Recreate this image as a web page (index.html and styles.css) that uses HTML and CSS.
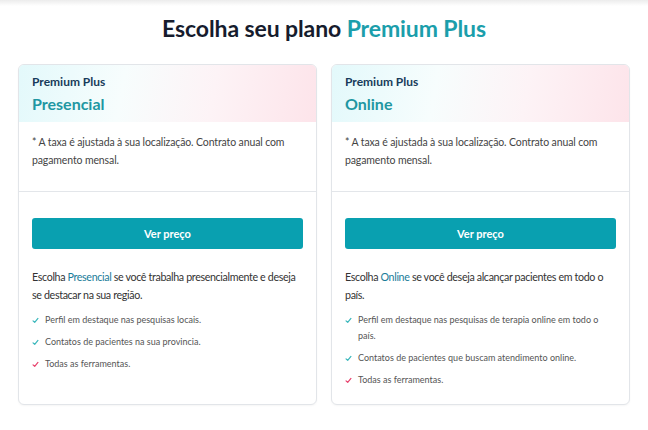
FILE: index.html
```html
<!DOCTYPE html>
<html lang="pt">
<head>
<meta charset="utf-8">
<title>Escolha seu plano Premium Plus</title>
<link rel="stylesheet" href="styles.css">
</head>
<body>
<main class="page">
  <h1 class="title">Escolha seu plano <span class="accent">Premium Plus</span></h1>
  <div class="plans">
    <section class="card">
      <header class="card-head">
        <div class="kicker">Premium Plus</div>
        <div class="plan-name">Presencial</div>
      </header>
      <div class="card-note">
        <p>* A taxa é ajustada à sua localização. Contrato anual com pagamento mensal.</p>
      </div>
      <div class="card-body">
        <button class="btn">Ver preço</button>
        <p class="desc">Escolha <span class="link">Presencial</span> se você trabalha presencialmente e deseja se destacar na sua região.</p>
        <ul class="features">
          <li><svg class="check teal" viewBox="0 0 8 8"><path d="M1.2 4.4 L3.1 6.2 L6.8 1.6"/></svg><span>Perfil em destaque nas pesquisas locais.</span></li>
          <li><svg class="check teal" viewBox="0 0 8 8"><path d="M1.2 4.4 L3.1 6.2 L6.8 1.6"/></svg><span>Contatos de pacientes na sua provincia.</span></li>
          <li><svg class="check pink" viewBox="0 0 8 8"><path d="M1.2 4.4 L3.1 6.2 L6.8 1.6"/></svg><span>Todas as ferramentas.</span></li>
        </ul>
      </div>
    </section>
    <section class="card">
      <header class="card-head">
        <div class="kicker">Premium Plus</div>
        <div class="plan-name">Online</div>
      </header>
      <div class="card-note">
        <p>* A taxa é ajustada à sua localização. Contrato anual com pagamento mensal.</p>
      </div>
      <div class="card-body">
        <button class="btn">Ver preço</button>
        <p class="desc">Escolha <span class="link">Online</span> se você deseja alcançar pacientes em todo o país.</p>
        <ul class="features">
          <li><svg class="check teal" viewBox="0 0 8 8"><path d="M1.2 4.4 L3.1 6.2 L6.8 1.6"/></svg><span>Perfil em destaque nas pesquisas de terapia online em todo o país.</span></li>
          <li><svg class="check teal" viewBox="0 0 8 8"><path d="M1.2 4.4 L3.1 6.2 L6.8 1.6"/></svg><span>Contatos de pacientes que buscam atendimento online.</span></li>
          <li><svg class="check pink" viewBox="0 0 8 8"><path d="M1.2 4.4 L3.1 6.2 L6.8 1.6"/></svg><span>Todas as ferramentas.</span></li>
        </ul>
      </div>
    </section>
  </div>
</main>
</body>
</html>
```
FILE: styles.css
```css
* { box-sizing: border-box; }
html, body { margin: 0; padding: 0; }
body {
  background: linear-gradient(#ececec 0, #ffffff 6px);
  font-family: Lato, "Noto Sans", sans-serif;
  color: #3a3a3a;
  width: 648px;
  height: 430px;
  overflow: hidden;
}
.page {
  width: 612px;
  margin: 0 auto;
  padding-top: 14px;
}
.title {
  margin: 0;
  text-align: center;
  font-size: 23px;
  line-height: 28px;
  font-weight: 700;
  color: #161c2d;
  letter-spacing: -0.1px;
}
.title .accent { color: #1b9eab; }
.plans {
  margin-top: 22px;
  display: grid;
  grid-template-columns: 1fr 1fr;
  gap: 14px;
  align-items: stretch;
}
.card {
  border: 1px solid #e2e5e9;
  border-radius: 6px;
  overflow: hidden;
  background: #fff;
  box-shadow: 0 1px 2px rgba(0,0,0,0.04);
  display: flex;
  flex-direction: column;
}
.card-head {
  height: 57px;
  padding: 9px 13px 0;
  background: linear-gradient(100deg, #e3f9fb 0%, #f7fdfd 35%, #fdf3f6 65%, #fde4ea 100%);
}
.kicker {
  font-size: 12px;
  line-height: 16px;
  font-weight: 700;
  color: #173b5a;
}
.plan-name {
  margin-top: 4px;
  font-size: 16px;
  line-height: 20px;
  font-weight: 700;
  color: #1f97a2;
}
.card-note {
  padding: 11px 13px 22px;
  border-bottom: 1px solid #e3e6ea;
}
.card-note p {
  margin: 0;
  font-size: 10.5px;
  line-height: 18px;
  letter-spacing: -0.12px;
  color: #444;
}
.card-body {
  padding: 26px 13px 16px;
  flex: 1;
}
.btn {
  display: block;
  width: 100%;
  height: 31px;
  border: 0;
  border-radius: 3px;
  background: #09a0b0;
  color: #fff;
  font-family: inherit;
  font-size: 11px;
  font-weight: 700;
}
.desc {
  margin: 19px 0 0;
  font-size: 10.7px;
  line-height: 18px;
  letter-spacing: -0.35px;
  color: #333;
}
.link { color: #1a7c99; }
.features {
  list-style: none;
  margin: 8px 0 0;
  padding: 0;
  display: flex;
  flex-direction: column;
  gap: 6px;
}
.features li {
  display: flex;
  align-items: flex-start;
  gap: 6px;
  font-size: 9px;
  line-height: 16px;
  color: #555;
}
.check {
  flex: 0 0 auto;
  width: 7px;
  height: 7px;
  margin-top: 4.5px;
  fill: none;
  stroke-width: 1.4;
  stroke-linecap: round;
  stroke-linejoin: round;
}
.check.teal { stroke: #3cb8bc; }
.check.pink { stroke: #e8456f; }
```
